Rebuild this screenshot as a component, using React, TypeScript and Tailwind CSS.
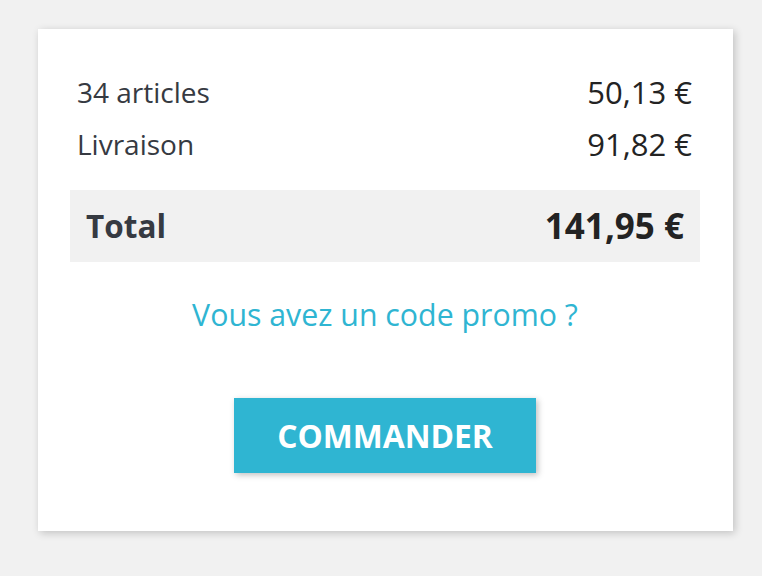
const App: React.FC = () => {
  return (
    <div className="min-h-[576px] w-[762px] bg-[#f1f1f1] pt-[29px] pl-[38px] font-['Open_Sans',sans-serif]">
      <div className="flex h-[502px] w-[695px] flex-col bg-white pl-8 pr-[33px] pt-[37px] shadow-[2px_2px_8px_0_rgba(0,0,0,0.2)]">
        <div className="flex items-center justify-between pl-[7px] pr-[8px] leading-[52px]">
          <span className="text-[28px] text-[#363a42]">34 articles</span>
          <span className="text-[31px] text-[#232323]">50,13 €</span>
        </div>
        <div className="flex items-center justify-between pl-[7px] pr-[8px] leading-[52px]">
          <span className="text-[28px] text-[#363a42]">Livraison</span>
          <span className="text-[31px] text-[#232323]">91,82 €</span>
        </div>
        <div className="mt-5 flex h-[72px] items-center justify-between bg-[#f1f1f1] px-4 font-bold">
          <span className="text-[31.5px] text-[#363a42]">Total</span>
          <span className="text-[35px] text-[#232323]">141,95 €</span>
        </div>
        <div className="mt-[31px] text-center text-[30.3px] leading-[44px] text-[#2fb5d2]">
          Vous avez un code promo ?
        </div>
        <div className="mt-[61px] flex justify-center">
          <button className="h-[75px] w-[302px] bg-[#2fb5d2] text-[31.8px] font-bold uppercase text-white shadow-[2px_2px_6px_0_rgba(0,0,0,0.25)]">
            Commander
          </button>
        </div>
      </div>
    </div>
  );
};

export default App;
